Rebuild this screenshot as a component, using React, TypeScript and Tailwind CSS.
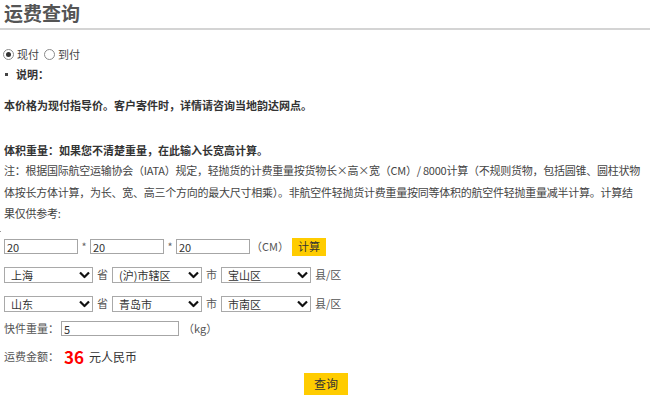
import { useState } from 'react'

const provinces = ['上海', '山东']
const cities: Record<string, string[]> = { 上海: ['(沪)市辖区'], 山东: ['青岛市'] }
const districts: Record<string, string[]> = { '(沪)市辖区': ['宝山区'], 青岛市: ['市南区'] }

function Chevron() {
  return (
    <svg
      width="11"
      height="7"
      viewBox="0 0 11 7"
      className="pointer-events-none absolute right-[3px] top-1/2 -translate-y-1/2"
    >
      <path d="M1 1l4.5 4.5L10 1" fill="none" stroke="#111" strokeWidth="2.2" />
    </svg>
  )
}

function Select({ value, options, width }: { value: string; options: string[]; width: string }) {
  return (
    <div className={`relative h-[16px] ${width}`}>
      <select
        defaultValue={value}
        className="h-full w-full appearance-none border border-[#a9a9a9] bg-white pl-[6px] text-[11px] leading-[14px] text-[#333] outline-none"
      >
        {options.map((o) => (
          <option key={o}>{o}</option>
        ))}
      </select>
      <Chevron />
    </div>
  )
}

function Radio({ checked }: { checked: boolean }) {
  return (
    <span className="flex h-[11px] w-[11px] items-center justify-center rounded-full border border-[#8a8a8a] bg-white">
      {checked && <span className="h-[5px] w-[5px] rounded-full bg-[#333]" />}
    </span>
  )
}

export default function App() {
  const [pay, setPay] = useState<'now' | 'later'>('now')
  const [dims, setDims] = useState(['20', '20', '20'])
  const [weight, setWeight] = useState('5')

  const fromRow = { p: '上海', c: '(沪)市辖区', d: '宝山区' }
  const toRow = { p: '山东', c: '青岛市', d: '市南区' }

  return (
    <div className="h-[399px] w-[650px] overflow-hidden bg-white font-['Noto_Sans_CJK_SC',sans-serif] text-[11px] text-[#333]">
      {/* Header */}
      <div className="h-[30px] border-b-2 border-[#d4d4d4] pl-[4px]">
        <h1 className="text-[19px] font-bold leading-[26px] text-[#555]">运费查询</h1>
      </div>

      <div className="pl-[4px]">
        {/* Payment type */}
        <div className="mt-[14px] flex h-[20px] items-center text-[#444]">
          <button onClick={() => setPay('now')} className="-ml-[1px] flex items-center gap-[3px]">
            <Radio checked={pay === 'now'} />
            <span>现付</span>
          </button>
          <button onClick={() => setPay('later')} className="ml-[5px] flex items-center gap-[3px]">
            <Radio checked={pay === 'later'} />
            <span>到付</span>
          </button>
        </div>

        <div className="flex h-[20px] items-center pl-[1px]">
          <span className="h-[3px] w-[3px] bg-[#444]" />
          <span className="ml-[8px] font-bold">说明：</span>
        </div>

        <div className="mt-[11px] h-[20px] font-bold leading-[20px]">
          本价格为现付指导价。客户寄件时，详情请咨询当地韵达网点。
        </div>

        <div className="mt-[25px] h-[20px] font-bold leading-[20px]">
          体积重量：如果您不清楚重量，在此输入长宽高计算。
        </div>

        <p className="whitespace-nowrap leading-[21.5px] tracking-[-0.25px] text-[#444]">
          注：根据国际航空运输协会（IATA）规定，轻抛货的计费重量按货物长×高×宽（CM）/ 8000计算（不规则货物，包括圆锥、圆柱状物
          <br />
          体按长方体计算，为长、宽、高三个方向的最大尺寸相乘）。非航空件轻抛货计费重量按同等体积的航空件轻抛重量减半计算。计算结
          <br />
          果仅供参考:
        </p>
      </div>

      <div className="mt-[6px] h-[1px] w-[1px] bg-[#999]" />

      <div className="pl-[4px]">
        {/* Dimensions */}
        <div className="mt-[6px] flex h-[18px] items-center">
          {dims.map((d, i) => (
            <div key={i} className="flex items-center">
              {i > 0 && <span className="w-[12px] self-start text-center leading-[14px] text-[#666]">*</span>}
              <input
                value={d}
                onChange={(e) => setDims((prev) => prev.map((v, j) => (j === i ? e.target.value : v)))}
                className="h-[15px] w-[74px] border border-[#a6a6a6] px-[2px] text-[11px] leading-[13px] text-[#333] outline-none"
              />
            </div>
          ))}
          <span className="ml-[1px] text-[#555]">（CM）</span>
          <button className="ml-[3px] h-[18px] w-[34px] bg-[#ffcc00] text-[11px] text-[#333]">计算</button>
        </div>

        {/* Origin */}
        <div className="mt-[11px] flex h-[16px] items-center text-[#555]">
          <Select value={fromRow.p} options={provinces} width="w-[89px]" />
          <span className="mx-[4px]">省</span>
          <Select value={fromRow.c} options={cities[fromRow.p]} width="w-[90px]" />
          <span className="mx-[4px]">市</span>
          <Select value={fromRow.d} options={districts[fromRow.c]} width="w-[90px]" />
          <span className="ml-[4px]">县/区</span>
        </div>

        {/* Destination */}
        <div className="mt-[13px] flex h-[16px] items-center text-[#555]">
          <Select value={toRow.p} options={provinces} width="w-[89px]" />
          <span className="mx-[4px]">省</span>
          <Select value={toRow.c} options={cities[toRow.p]} width="w-[90px]" />
          <span className="mx-[4px]">市</span>
          <Select value={toRow.d} options={districts[toRow.c]} width="w-[90px]" />
          <span className="ml-[4px]">县/区</span>
        </div>

        {/* Weight */}
        <div className="mt-[9px] flex h-[16px] items-center text-[#555]">
          <span>快件重量：</span>
          <input
            value={weight}
            onChange={(e) => setWeight(e.target.value)}
            className="ml-[2px] h-[15px] w-[118px] border border-[#a6a6a6] px-[2px] text-[11px] leading-[13px] text-[#333] outline-none"
          />
          <span className="ml-[4px]">（kg）</span>
        </div>

        {/* Result */}
        <div className="mt-[10px] flex h-[20px] items-center">
          <span className="text-[#555]">运费金额：</span>
          <span className="ml-[5px] text-[17px] font-bold text-[#ff0000]">36</span>
          <span className="ml-[5px] text-[12px] text-[#333]">元人民币</span>
        </div>
      </div>

      <div className="mt-[6px] flex justify-center">
        <button className="ml-[2px] h-[22px] w-[44px] bg-[#ffcc00] text-[12px] text-[#333]">查询</button>
      </div>
    </div>
  )
}
